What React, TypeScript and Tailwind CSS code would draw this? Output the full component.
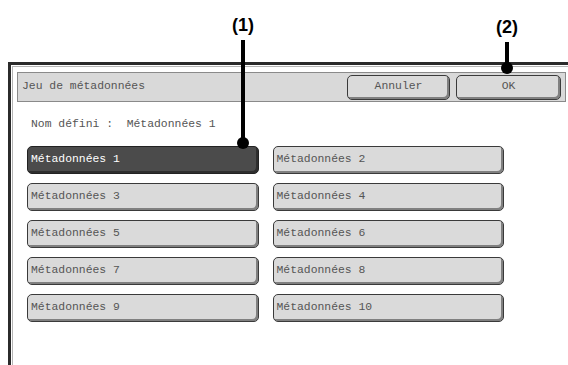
import React from "react";

const items = [
  "Métadonnées 1",
  "Métadonnées 2",
  "Métadonnées 3",
  "Métadonnées 4",
  "Métadonnées 5",
  "Métadonnées 6",
  "Métadonnées 7",
  "Métadonnées 8",
  "Métadonnées 9",
  "Métadonnées 10",
];

const Callout = ({ label, x, top, bottom }: { label: string; x: number; top: number; bottom: number }) => (
  <div className="absolute flex flex-col items-center" style={{ left: x - 20, top, width: 40 }}>
    <span className="font-['Liberation_Sans',Arial,sans-serif] font-bold text-[18px] leading-[20px] text-black">
      {label}
    </span>
    <div className="w-[4px] bg-black mt-[5px]" style={{ height: bottom - top - 25 - 5 }} />
    <div className="w-[12px] h-[12px] rounded-full bg-black -mt-[6px]" />
  </div>
);

export default function App() {
  return (
    <div className="relative w-[568px] h-[365px] bg-white overflow-hidden font-['Liberation_Mono','Courier_New',monospace] text-[11.4px] text-[#555]">
      {/* dialog frame, cropped at right and bottom */}
      <div className="ml-[8px] mt-[62px] w-[600px] h-[400px] border-l-[3px] border-t-[3px] border-[#2b2b2b]">
        <div className="ml-[1px] mt-[1px] h-full border-l border-t border-[#b5b5b5]">
          {/* title bar */}
          <div className="ml-[4px] mt-[5px] w-[549px] h-[30px] flex items-center bg-[#d9d9d9] border border-[#8a8a8a] pl-[4px] pr-[4px]">
            <span>Jeu de métadonnées</span>
            <div className="ml-auto flex gap-[6px]">
              <button className="w-[103px] h-[25px] rounded-[5px] bg-[#dadada] border border-[#3a3a3a] shadow-[inset_-2px_-2px_0_#808080] flex items-center justify-center">
                Annuler
              </button>
              <button className="w-[105px] h-[25px] rounded-[5px] bg-[#dadada] border border-[#3a3a3a] shadow-[inset_-2px_-2px_0_#808080] flex items-center justify-center">
                OK
              </button>
            </div>
          </div>

          <div className="mt-[15px] pl-[18px] leading-[14px] whitespace-pre">Nom défini :  Métadonnées 1</div>

          <div className="mt-[15px] ml-[14px] w-[477px] grid grid-cols-2 gap-x-[14px] gap-y-[9px]">
            {items.map((t, i) => (
              <div
                key={t}
                className={
                  i === 0
                    ? "h-[28px] rounded-[5px] flex items-center pl-[3px] bg-[#4b4b4b] text-white border border-[#222] shadow-[inset_-2px_-2px_0_#2e2e2e]"
                    : "h-[28px] rounded-[5px] flex items-center pl-[3px] bg-[#dadada] border border-[#3a3a3a] shadow-[inset_-2px_-2px_0_#808080]"
                }
              >
                {t}
              </div>
            ))}
          </div>
        </div>
      </div>

      {/* annotation callouts */}
      <Callout label="(1)" x={243} top={15} bottom={148} />
      <Callout label="(2)" x={507} top={17} bottom={73} />
    </div>
  );
}
